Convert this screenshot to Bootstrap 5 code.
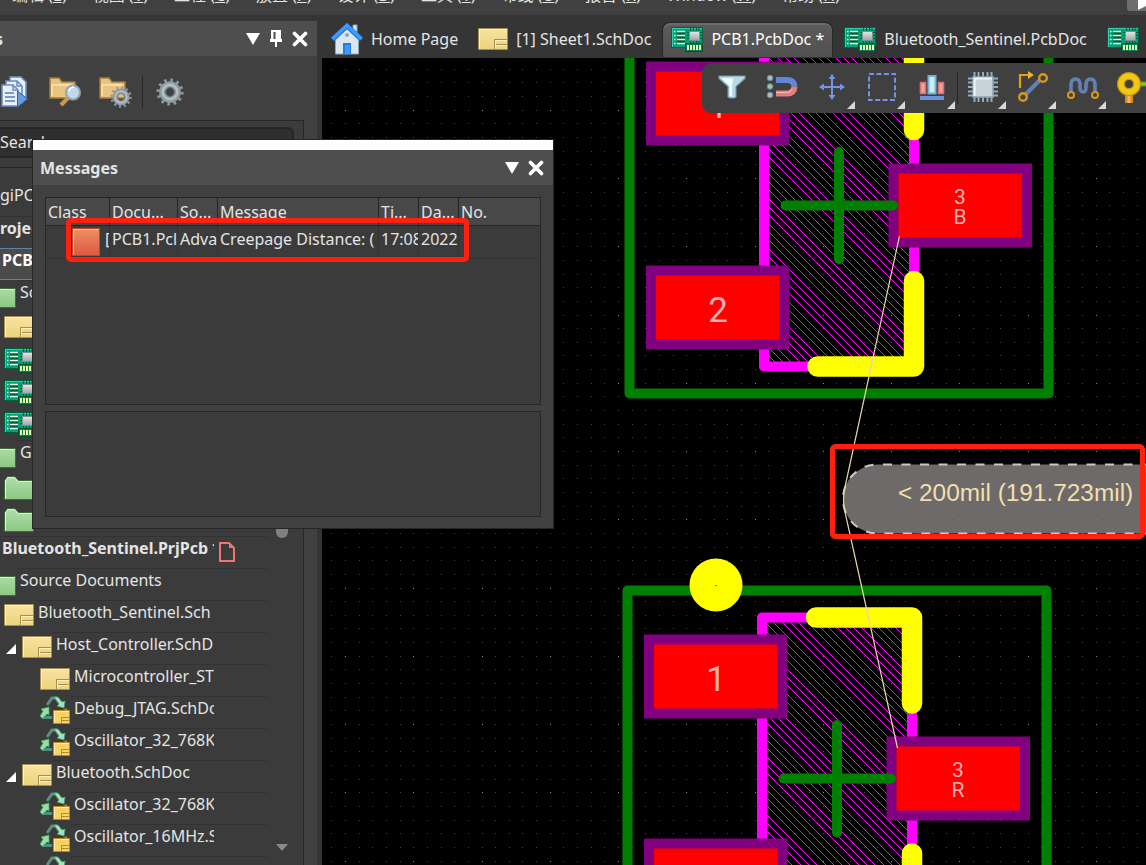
<!DOCTYPE html>
<html lang="zh-CN">
<head>
<meta charset="utf-8">
<meta name="viewport" content="width=device-width, initial-scale=1">
<title>PCB1.PcbDoc</title>
<link rel="stylesheet" href="https://cdn.jsdelivr.net/npm/bootstrap@5.3.0/dist/css/bootstrap.min.css">
<style>
  body { font-family: "Noto Sans", "Noto Sans CJK SC", sans-serif; font-size: 16px; line-height: 24px; background: #353535; color: #e4e4e4; }
  b { font-weight: 700; }
  button { font: inherit; color: inherit; background: none; border: 0; padding: 0; }
  svg { display: block; flex: none; }
  .menubar { height: 15px; background: #404040; gap: 26px; padding: 0 0 10px 12px; }
  .menubar button { line-height: 20px; white-space: nowrap; }
  .menu-tip { right: 0; top: 0; width: 19px; height: 11px; }
  .side { width: 317px; margin: 6px 5px 0 0; background: #404040; }
  .side-head { height: 35px; background: #4e4e4e; padding-right: 9px; gap: 10px; }
  .side-tools { height: 64px; }
  .side-search { width: 304px; height: 47px; border: 1px solid #262626; border-left: 0; border-bottom: 0; padding: 6px 9px 9px 0; background: #3c3c3c; }
  .side-search input { width: 100%; height: 31px; background: #2f2f2f; color: #e4e4e4; border: 2px solid #262626; border-left: 0; border-radius: 0 6px 6px 0; padding: 0 0 2px; outline: 0; }
  .tree-frame { width: 304px; border: 1px solid #262626; border-width: 1px 1px 0 0; background: #3b3b3b; padding-top: 16px; }
  .tree-list { width: 268px; }
  .tree-row { height: 32px; gap: 1px; flex: none; }
  .tree-row svg { margin-top: 4px; }
  .tree-text { border-top: 1px solid #333; height: 32px; padding: 0 54px 0 3px; min-width: 0; line-height: 22px; }
  .tree-text span { display: block; overflow: hidden; white-space: nowrap; }
  .lv-0 { padding-left: 4px; } .lv-1 { padding-left: 6px; } .lv-2 { padding-left: 40px; }
  .lv-1 .twist { margin-right: 5px; }
  .root-text { padding-left: 2px; font-weight: 700; }
  .picked { border: solid #5f83a5; border-width: 1px 0; background: #4b4b4b; font-weight: 700; padding-left: 1px; color: #fff; }
  .picked .tree-text { border: 0; padding-left: 1px; }
  .scroller { width: 12px; margin-left: 8px; padding-bottom: 14px; }
  .scroller i { height: 53%; border-radius: 6px; background: #808080; }
  .doctabs { height: 43px; gap: 2px; padding: 7px 0 1px; background: #353535; line-height: 22px; }
  .doctab { height: 35px; gap: 8px; padding: 0 8px 2px; flex: none; border: 1px solid transparent; border-bottom: 0; white-space: nowrap; }
  .doctab.on { background: linear-gradient(#5c5c5c, #505050); border-color: #262626; border-radius: 8px 8px 0 0; box-shadow: inset 0 2px #6a6a6a; color: #fff; }
  .board { background: #000; min-height: 0; }
  .board text { font-family: "Liberation Sans", sans-serif; }
  .board .pad-no { font-family: Roboto, sans-serif; }
  .floatbar { left: 380px; right: 0; top: 5px; height: 50px; background: #404040; border-radius: 9px 0 0 9px; padding-left: 5px; overflow: hidden; }
  .floatbar button { width: 50px; height: 50px; flex: none; position: relative; padding-bottom: 2px; }
  .floatbar .more::after { content: ""; position: absolute; right: 2px; bottom: 4px; border: 4px solid transparent; border-right-color: #d8d8d8; border-bottom-color: #d8d8d8; }
  .bar-line { width: 1px; height: 32px; background: #262626; flex: none; }
  .dialog-box { left: 33px; top: 140px; width: 520px; height: 388px; background: #404040; border-top: 10px solid #fff; box-shadow: 0 0 0 1px #262626; z-index: 5; }
  .dialog-head { height: 35px; background: #4e4e4e; padding: 0 9px 0 7px; gap: 9px; }
  .grid-frame { margin: 12px 12px 0; height: 208px; border: 1px solid #262626; background: #3b3b3b; }
  .note-frame { margin: 6px 12px 0; height: 106px; border: 1px solid #262626; background: #3b3b3b; }
  .msgs { table-layout: fixed; width: 100%; border-collapse: separate; border-spacing: 0; }
  .msgs th, .msgs td { font-weight: 400; white-space: nowrap; overflow: hidden; padding: 0 0 0 2px; border-left: 1px solid #343434; }
  .msgs th { height: 28px; background: #484848; border-bottom: 1px solid #262626; border-left-color: #262626; }
  .msgs td { height: 33px; border-bottom: 1px solid #343434; line-height: 26px; vertical-align: top; }
  .msgs th:first-child, .msgs td:first-child { border-left: 0; }
  .marker { left: 33px; top: 68px; width: 403px; height: 44px; border: 5px solid #ff2010; border-radius: 5px; }
</style>
</head>
<body class="vh-100 d-flex flex-column overflow-hidden">

<svg width="0" height="0" class="position-absolute" aria-hidden="true">
  <defs>
    <linearGradient id="gSheet" x2="0" y2="1"><stop stop-color="#f6e3a0"/><stop offset="1" stop-color="#edd37b"/></linearGradient>
    <linearGradient id="gFold" x2="0" y2="1"><stop stop-color="#b4dcae"/><stop offset="1" stop-color="#8cc982"/></linearGradient>
    <linearGradient id="gChip" x2="0" y2="1"><stop stop-color="#e4e8e6"/><stop offset="1" stop-color="#98a8a2"/></linearGradient>
    <linearGradient id="gErr" x2="0" y2="1"><stop stop-color="#ec9064"/><stop offset="1" stop-color="#de5a40"/></linearGradient>
    <symbol id="sheet" viewBox="0 0 30 22"><path d="M.5.5h29v21H.5z" fill="url(#gSheet)" stroke="#a58f57"/><path d="M1.5 20.5v-19h27" fill="none" stroke="#fff2c0"/><path d="M16.500 21V11.500H29M16.500 16.500H29" fill="none" stroke="#a58f57"/><path d="M17.500 20.500V12.500H29M17.500 17.500H29" fill="none" stroke="#fff2c0"/></symbol>
    <symbol id="folder" viewBox="0 0 30 24"><path d="M.5 23.500V4.500L3.500.5H11l3.500 4H29.500v19z" fill="url(#gFold)" stroke="#3f6a3d"/><path d="M1.500 22.500V5L4 1.500h6.500L14 5.500H29" fill="none" stroke="#dcf2d8"/></symbol>
    <symbol id="pcb" viewBox="0 0 32 25"><path d="M.5.500h31v20h-31z" fill="#00a078" stroke="#00603c"/><path d="M1.500 20V1.500H31" fill="none" stroke="#35d0a8"/><path d="M6 4h8v13H6z" fill="#006038"/><path d="M6 4.500h8M6 8.500h8M6 12.500h8M6 16.500h8" stroke="#e8ffe8" stroke-width="1.300"/><path d="M3 4.500h1.500M3 8.500h1.500M3 12.500h1.500M3 16.500h1.500" stroke="#e8ffe8" stroke-width="1.300"/><path d="M19.500 1v16M22.500 1v16M25.500 1v16M28 1v16M16 5.500h15M16 8.500h15M16 11.500h15" stroke="#005a3a"/><path d="M18.500 4.500h10v9h-10z" fill="url(#gChip)" stroke="#7f8f89"/><path d="M14.500 16.500h17v8h-17z" fill="#008058" stroke="#00502f"/><path d="M17 18v5M20 18v5M23 18v5M26 18v5M29 18v5" stroke="#f1f79a" stroke-width="2"/></symbol>
    <symbol id="reuse" viewBox="0 0 32 28"><path d="M8 9l5-7h4l3 4" fill="none" stroke="#5c9082" stroke-width="3"/><path d="M15 1h4l4 5 3-1-1 7-7-2 2-2z" fill="#9be8b4" stroke="#4f9a72" stroke-width=".8"/><path d="M1 20l3-5-2-2 8-2v8l-2-1-4 5z" fill="#8fdfa6" stroke="#4f9a72" stroke-width=".8"/><path d="M5 20h8v3H4z" fill="#568a7c"/><path d="M24 14l3-2 2 2z" fill="#568a7c"/><path d="M14.500 14.500h16v13h-16z" fill="#f8d468" stroke="#b78a22"/><path d="M15.500 26.500v-11h14" fill="none" stroke="#ffeaa0"/><path d="M22.500 27v-5.500H30M22.500 24.500H30" fill="none" stroke="#b78a22"/></symbol>
    <symbol id="gear" viewBox="-14 -14 28 28"><circle r="11.800" fill="none" stroke="#8c9aa2" stroke-width="3.600" stroke-dasharray="2.500 3.678"/><circle r="7.600" fill="none" stroke="#8d9ba3" stroke-width="6.400"/><circle r="7.300" fill="none" stroke="#b3bfc5" stroke-width="2.400"/><circle r="4.300" fill="none" stroke="#5e6c74"/></symbol>
    <symbol id="cross" viewBox="0 0 16 16"><path d="M2.500 2.500l11 11M13.500 2.500l-11 11" stroke="#fff" stroke-width="3.600" stroke-linecap="round"/></symbol>
    <symbol id="down" viewBox="0 0 14 12"><path d="M0 0h14L7 12z" fill="#fff"/></symbol>
    <symbol id="twist" viewBox="0 0 10 10"><path d="M10 0v10H0z" fill="#fff"/></symbol>
  </defs>
</svg>

<nav class="menubar d-flex align-items-end overflow-hidden position-relative flex-shrink-0">
  <button>编辑 (<u>E</u>)</button><button>视图 (<u>V</u>)</button><button>工程 (<u>C</u>)</button><button>放置 (<u>P</u>)</button><button>设计 (<u>D</u>)</button><button>工具 (<u>T</u>)</button><button>布线 (<u>U</u>)</button><button>报告 (<u>R</u>)</button><button>Window (<u>W</u>)</button><button>帮助 (<u>H</u>)</button>
  <svg class="menu-tip position-absolute" viewBox="0 0 19 11"><path d="M0 0h19v11H3q-3 0-3-3z" fill="#6d6d6d"/><path d="M11 0h8v6l-8 4z" fill="#fff"/></svg>
</nav>

<div class="d-flex flex-grow-1" style="min-height:0">
  <aside class="side d-flex flex-column flex-shrink-0 overflow-hidden">
    <header class="side-head d-flex align-items-center flex-shrink-0">
      <b class="me-auto" style="margin-left:-5px">s</b>
      <button aria-label="Menu"><svg width="14" height="12"><use href="#down"/></svg></button>
      <button aria-label="Pin"><svg width="12" height="18" viewBox="0 0 12 18"><path d="M1 0h10v11H1z" fill="#fff"/><path d="M3.500 2h2v8h-2z" fill="#4e4e4e"/><path d="M0 9h12v3H0zM5 12h2v5H5z" fill="#fff"/></svg></button>
      <button aria-label="Close"><svg width="16" height="16"><use href="#cross"/></svg></button>
    </header>
    <div class="side-tools d-flex align-items-center flex-shrink-0 pt-2">
      <button aria-label="Compile"><svg width="29" height="32" viewBox="0 0 29 32"><g fill="#e8eff6" stroke="#6a8fbe" stroke-width="1.600"><path d="M10 1h11l5 5v17H10z"/><path d="M6 5h11l5 5v17H6z"/><path d="M2 9h11l5 5v16H2z"/></g><path d="M13 9v5h5M17 5v5h5" fill="none" stroke="#6a8fbe" stroke-width="1.500"/><path d="M5 17h9M5 21h10M5 25h10" stroke="#5a80b0" stroke-width="1.500"/><path d="M17.500 15l10 8-10 8z" fill="#6a9be0" stroke="#2f5fa8"/></svg></button>
      <button aria-label="Find files" style="margin-left:20px"><svg width="32" height="32" viewBox="0 0 32 32"><path d="M1 22V2h9l3 4h13v16z" fill="#e9c47e" stroke="#a07a3c" stroke-width="1.600"/><path d="M3 20V9h20" fill="none" stroke="#fbe6b8" stroke-width="1.400"/><path d="M19 22l-7 7" stroke="#c99a4c" stroke-width="4"/><circle cx="24" cy="16.500" r="7" fill="#c5d8ea" stroke="#8fa5b5" stroke-width="2"/><path d="M20 15q1-4 5-4" fill="none" stroke="#fff" stroke-width="1.500"/></svg></button>
      <button aria-label="Folder options" style="margin-left:18px"><svg width="33" height="32" viewBox="0 0 33 32"><path d="M1 22V2h9l3 4h13v16z" fill="#e9c47e" stroke="#a07a3c" stroke-width="1.600"/><path d="M3 20V9h20" fill="none" stroke="#fbe6b8" stroke-width="1.400"/><use href="#gear" x="11" y="10" width="22" height="22"/></svg></button>
      <div class="bar-line" style="margin-left:10px"></div>
      <button aria-label="Settings" style="margin-left:13px"><svg width="28" height="28"><use href="#gear"/></svg></button>
    </div>
    <div class="side-search flex-shrink-0"><input type="text" value="Search" aria-label="Search"></div>
    <div class="tree-frame d-flex flex-grow-1 overflow-hidden">
      <div class="tree-list overflow-hidden">
        <div class="tree-row d-flex"><div class="tree-text flex-grow-1 border-0 ps-0"><span>giPC</span></div></div>
        <div class="tree-row d-flex"><div class="tree-text root-text flex-grow-1 ps-0"><span>rojec</span></div></div>
        <div class="tree-row d-flex picked"><div class="tree-text flex-grow-1"><span>PCB</span></div></div>
        <div class="tree-row d-flex"><svg width="16" height="24" viewBox="14 0 16 24"><use href="#folder" width="30" height="24"/></svg><div class="tree-text flex-grow-1"><span>So</span></div></div>
        <div class="tree-row d-flex lv-0"><svg width="30" height="22"><use href="#sheet"/></svg></div>
        <div class="tree-row d-flex lv-0"><svg width="32" height="25"><use href="#pcb"/></svg></div>
        <div class="tree-row d-flex lv-0"><svg width="32" height="25"><use href="#pcb"/></svg></div>
        <div class="tree-row d-flex lv-0"><svg width="32" height="25"><use href="#pcb"/></svg></div>
        <div class="tree-row d-flex"><svg width="16" height="24" viewBox="14 0 16 24"><use href="#folder" width="30" height="24"/></svg><div class="tree-text flex-grow-1"><span>G</span></div></div>
        <div class="tree-row d-flex lv-0"><svg width="30" height="24"><use href="#folder"/></svg></div>
        <div class="tree-row d-flex lv-0"><svg width="30" height="24"><use href="#folder"/></svg></div>
        <div class="tree-row d-flex position-relative"><div class="tree-text root-text flex-grow-1"><span>Bluetooth_Sentinel.PrjPcb *</span></div><svg class="position-absolute end-0 me-4" style="margin-top:6px" width="25" height="20" viewBox="0 0 25 20"><path d="M1 1h9l5 5v13H1z" fill="none" stroke="#f07474" stroke-width="2"/><path d="M10 1v5h5z" fill="#f07474"/></svg></div>
        <div class="tree-row d-flex"><svg width="16" height="24" viewBox="14 0 16 24"><use href="#folder" width="30" height="24"/></svg><div class="tree-text flex-grow-1"><span>Source Documents</span></div></div>
        <div class="tree-row d-flex lv-0"><svg width="30" height="22"><use href="#sheet"/></svg><div class="tree-text flex-grow-1"><span>Bluetooth_Sentinel.Sch</span></div></div>
        <div class="tree-row d-flex lv-1"><svg class="twist mt-2 pt-1" width="10" height="14"><use href="#twist"/></svg><svg width="30" height="22"><use href="#sheet"/></svg><div class="tree-text flex-grow-1"><span>Host_Controller.SchD</span></div></div>
        <div class="tree-row d-flex lv-2"><svg width="30" height="22"><use href="#sheet"/></svg><div class="tree-text flex-grow-1"><span>Microcontroller_ST</span></div></div>
        <div class="tree-row d-flex lv-2"><svg class="mt-0" width="30" height="28" viewBox="1 0 30 28"><use href="#reuse" width="32" height="28"/></svg><div class="tree-text flex-grow-1"><span>Debug_JTAG.SchDo</span></div></div>
        <div class="tree-row d-flex lv-2"><svg class="mt-0" width="30" height="28" viewBox="1 0 30 28"><use href="#reuse" width="32" height="28"/></svg><div class="tree-text flex-grow-1"><span>Oscillator_32_768K</span></div></div>
        <div class="tree-row d-flex lv-1"><svg class="twist mt-2 pt-1" width="10" height="14"><use href="#twist"/></svg><svg width="30" height="22"><use href="#sheet"/></svg><div class="tree-text flex-grow-1"><span>Bluetooth.SchDoc</span></div></div>
        <div class="tree-row d-flex lv-2"><svg class="mt-0" width="30" height="28" viewBox="1 0 30 28"><use href="#reuse" width="32" height="28"/></svg><div class="tree-text flex-grow-1"><span>Oscillator_32_768K</span></div></div>
        <div class="tree-row d-flex lv-2"><svg class="mt-0" width="30" height="28" viewBox="1 0 30 28"><use href="#reuse" width="32" height="28"/></svg><div class="tree-text flex-grow-1"><span>Oscillator_16MHz.S</span></div></div>
        <div class="tree-row d-flex lv-2"><svg class="mt-0" width="30" height="28" viewBox="1 0 30 28"><use href="#reuse" width="32" height="28"/></svg><div class="tree-text flex-grow-1"></div></div>
      </div>
      <div class="scroller d-flex flex-column justify-content-between"><i></i><svg width="12" height="7" viewBox="0 0 12 7"><path d="M0 0h12L6 7z" fill="#8a8a8a"/></svg></div>
    </div>
  </aside>

  <main class="d-flex flex-column flex-grow-1 overflow-hidden">
    <div class="doctabs d-flex flex-shrink-0 overflow-hidden">
      <button class="doctab d-flex align-items-center"><svg width="32" height="32" viewBox="0 0 32 32"><path d="M22 2h4v10h-4z" fill="#d8e4ec" stroke="#87a9bb"/><path d="M4.500 14L16 4l11.500 10v17h-23z" fill="#dce6f0" stroke="#87a9bb"/><path d="M1.500 16.500L16 3l14.500 13.500" fill="none" stroke="#1f6fd8" stroke-width="5"/><path d="M1.500 16L16 2.500 30.500 16" fill="none" stroke="#3d9bff" stroke-width="3.400"/><circle cx="16" cy="12" r="2" fill="#87a9bb"/><path d="M12 20h8v11h-8z" fill="#1f7cf0"/><path d="M14 22h5v9h-5z" fill="#3d9bff"/></svg>Home Page</button>
      <button class="doctab d-flex align-items-center"><svg width="30" height="22"><use href="#sheet"/></svg>[1] Sheet1.SchDoc</button>
      <button class="doctab on d-flex align-items-center"><svg width="32" height="25"><use href="#pcb"/></svg>PCB1.PcbDoc *</button>
      <button class="doctab d-flex align-items-center"><svg width="32" height="25"><use href="#pcb"/></svg>Bluetooth_Sentinel.PcbDoc</button>
      <button class="doctab d-flex align-items-center" aria-label="Next document"><svg width="32" height="25"><use href="#pcb"/></svg></button>
    </div>

    <section class="board position-relative flex-grow-1 overflow-hidden">
      <svg class="position-absolute w-100 h-100" role="img" aria-label="PCB layout">
        <g transform="translate(-322 -58)">
          <defs>
            <clipPath id="bodyA"><path d="M768 40h142v323H768z"/></clipPath>
            <clipPath id="bodyB"><path d="M766 621h142v260H766z"/></clipPath>
          </defs>
          <path id="minor" fill="#484848" shape-rendering="crispEdges"/>
          <path id="major" fill="#8a8a8a" shape-rendering="crispEdges"/>
          <g fill="none" stroke="#f0f" shape-rendering="crispEdges"><path id="hatchA" clip-path="url(#bodyA)"/><path id="hatchB" clip-path="url(#bodyB)"/></g>

          <g fill="none" stroke-linejoin="round" stroke-linecap="round" stroke-width="10">
            <path d="M629.500 40V393.500H1048.500V40" stroke="#008000"/>
            <path d="M764 40V366.500H914V40" stroke="#f0f"/>
            <path d="M627.500 900V590.500H1046.500V900" stroke="#008000"/>
            <path d="M762 900V617.500H912V900" stroke="#f0f"/>
          </g>
          <g fill="#f00" stroke="#800080" stroke-width="10">
            <path d="M651 66.500h133.500v74H651zM651 270.500h133.500v74H651zM893.500 168.500h133.500v74H893.500z"/>
            <path d="M649 639.500h133.500v74H649zM649 843.500h133.500v74H649zM891.500 741.500h133.500v74H891.500z"/>
          </g>
          <g fill="none" stroke-linejoin="round" stroke-linecap="round">
            <path d="M914 40V130M914 281V366.500H817.500M912 853.500V900M816 617.500H912V703.500" stroke="#ff0" stroke-width="20.500"/>
            <path d="M839 152V259M785.500 205.500H893M837 725V832.500M783.500 778.500H891" stroke="#008000" stroke-width="10"/>
          </g>
          <circle cx="716" cy="585" r="26.500" fill="#ff0"/><path d="M715 585h2v1h-2z" fill="#808000"/>
          <g fill="#ffb0b0" text-anchor="middle" font-size="35">
            <text class="pad-no" x="718" y="118">1</text><text class="pad-no" x="718" y="322">2</text><text class="pad-no" x="716" y="691">1</text>
            <g font-size="21"><text class="pad-no" x="960" y="204">3</text><text class="pad-no" x="960" y="224">B</text><text class="pad-no" x="958" y="777">3</text><text class="pad-no" x="958" y="797">R</text></g>
          </g>
          <path d="M1300 464.500H877.500a34.500 34.500 0 0 0 0 69H1300z" fill="#858080" fill-opacity=".83"/>
          <path d="M1300 464.500H877.500a34.500 34.500 0 0 0 0 69H1300" fill="none" stroke="#c8c8c8" stroke-width="2" stroke-dasharray="9 9.500" stroke-dashoffset="-1"/>
          <path d="M899.500 236L845 487 Q842 500 845 512L897.500 748" fill="none" stroke="#e6d7a6" stroke-width="1.200"/>
          <text x="898" y="501" font-size="24.400" fill="#f2dfae">&lt; 200mil (191.723mil)</text>
          <rect x="832.500" y="446.500" width="310" height="90" rx="3" fill="none" stroke="#ff2010" stroke-width="5"/>
        </g>
      </svg>

      <div class="floatbar position-absolute d-flex align-items-center">
        <button aria-label="Filter"><svg class="mx-auto" width="28" height="28" viewBox="0 0 28 28"><path d="M1 3h26v2.500l-9 8V24l-2 1h-4l-2-1V13.500L1 5.500z" fill="#b9dbe4" stroke="#7396aa" stroke-width="1.200"/><path d="M3 5.200h12l-1 8v10h-2.500V13z" fill="#eefafc"/></svg></button>
        <button aria-label="Snap"><svg class="mx-auto" width="32" height="28" viewBox="0 0 32 28"><g fill="#a6bdc0" stroke="#71898d"><circle cx="4" cy="5" r="2.800"/><circle cx="4" cy="13.500" r="2.800"/><circle cx="4" cy="22" r="2.800"/></g><path d="M10 7h11q7 0 7.500 6.500" fill="none" stroke="#5f86d8" stroke-width="6"/><path d="M28.500 13.500Q28 20.500 21 20.500H10" fill="none" stroke="#e08080" stroke-width="6"/><path d="M10 19.500h11q4 0 5-4" fill="none" stroke="#ffb4b4"/></svg></button>
        <button class="more" aria-label="Move"><svg class="mx-auto" width="28" height="28" viewBox="0 0 28 28"><path d="M14 3v22M3 14h22" stroke="#7293e6" stroke-width="2"/><path d="M14 1l3.500 5h-7zM14 27l3.500-5h-7zM1 14l5-3.500v7zM27 14l-5-3.500v7z" fill="#7293e6"/></svg></button>
        <button class="more" aria-label="Select"><svg class="mx-auto" width="28" height="28" viewBox="0 0 28 28"><path d="M1 1h26v26H1z" fill="none" stroke="#7293e6" stroke-width="2" stroke-dasharray="5 2.430"/></svg></button>
        <button class="more" aria-label="Align"><svg class="mx-auto" width="26" height="28" viewBox="0 0 26 28"><path d="M1.500 9.500h5v11h-5zM19.500 9.500h5v11h-5z" fill="#f0a0a0" stroke="#d87070" stroke-width="1.600"/><path d="M9.500 3h7v17.500h-7z" fill="#c8ecf8" stroke="#74b4d4" stroke-width="2"/><path d="M1 23h24v4H1z" fill="#6a94dc"/></svg></button>
        <div class="bar-line"></div>
        <button class="more" aria-label="Place part"><svg class="mx-auto" width="32" height="32" viewBox="0 0 32 32"><path d="M7.500 1v30M11.500 1v30M16 1v30M20.500 1v30M24.500 1v30M1 7.500h30M1 11.500h30M1 16h30M1 20.500h30M1 24.500h30" stroke="#93adbb" stroke-width="2"/><path d="M6 6h20v20H6z" fill="#c9d1d9" stroke="#8fa6b4" stroke-width="1.500"/><path d="M7.500 25V7.500H25" fill="none" stroke="#f2f6f8" stroke-width="2"/></svg></button>
        <button class="more" aria-label="Route"><svg class="mx-auto" width="32" height="32" viewBox="0 0 32 32"><path d="M8 24L24 8" stroke="#6480b0" stroke-width="4"/><path d="M3 17V4h10" fill="none" stroke="#e0a010" stroke-width="2.200"/><path d="M11 0l6 4-6 4z" fill="#f0b020"/><g fill="#40404a" stroke="#d89a10" stroke-width="2.400"><circle cx="26" cy="7" r="3.800"/><circle cx="6" cy="26" r="3.800"/></g></svg></button>
        <button class="more" aria-label="Tune length"><svg class="mx-auto" width="34" height="26" viewBox="0 0 34 26"><path d="M5 20V11q0-6 4.500-6T14 11v2q0 5 3 5t3-5v-2q0-6 4.500-6T29 11v9" fill="none" stroke="#6480b0" stroke-width="3.600"/><g fill="#40404a" stroke="#d89a10" stroke-width="2"><circle cx="5" cy="21" r="3"/><circle cx="29" cy="21" r="3"/></g></svg></button>
        <button aria-label="Place via"><svg class="ms-2" width="36" height="34" viewBox="0 0 36 34"><path d="M13 20v13" stroke="#d88a20" stroke-width="8"/><path d="M13 20v13" stroke="#f0b868" stroke-width="3"/><path d="M22 14h14" stroke="#5fa820" stroke-width="5"/><path d="M22 14h14" stroke="#a8e060"/><circle cx="13" cy="14" r="8" fill="none" stroke="#c89a00" stroke-width="8"/><circle cx="13" cy="14" r="8" fill="none" stroke="#f0c818" stroke-width="5.500"/></svg></button>
      </div>
    </section>
  </main>
</div>

<div class="dialog-box position-absolute" role="dialog" aria-label="Messages">
  <header class="dialog-head d-flex align-items-center">
    <b class="me-auto">Messages</b>
    <button aria-label="Menu"><svg width="14" height="12"><use href="#down"/></svg></button>
    <button aria-label="Close"><svg width="16" height="16"><use href="#cross"/></svg></button>
  </header>
  <div class="grid-frame">
    <table class="msgs">
      <colgroup><col style="width:63px"><col style="width:68px"><col style="width:40px"><col style="width:161px"><col style="width:40px"><col style="width:40px"><col></colgroup>
      <thead><tr><th>Class</th><th>Docu...</th><th>So...</th><th>Message</th><th>Ti...</th><th>Da...</th><th>No.</th></tr></thead>
      <tbody><tr><td><div class="d-flex overflow-hidden" style="padding-left:24px;gap:5px"><svg width="28" height="28" style="margin-top:2px" viewBox="0 0 28 28"><path d="M.5.500h27v27H.5z" fill="url(#gErr)" stroke="#c04a20"/><path d="M1.500 26.500v-25h25" fill="none" stroke="#ffc0a0"/></svg>[</div></td><td>PCB1.Pcl</td><td>Adva</td><td>Creepage Distance: (</td><td>17:08</td><td>2022</td><td></td></tr></tbody>
    </table>
  </div>
  <div class="note-frame"></div>
  <div class="marker position-absolute"></div>
</div>

<script src="https://cdn.jsdelivr.net/npm/bootstrap@5.3.0/dist/js/bootstrap.bundle.min.js"></script>
<script>
  // Editor grid: every fifth dot is a brighter major point.
  const step = 13.65, dots = { minor: '', major: '' };
  for (let i = -2; i < 180; i++) for (let j = -9; j < 120; j++) {
    const x = Math.round(345 + i * step), y = Math.round(178 + j * step);
    dots[i % 5 === 0 && j % 5 === 0 ? 'major' : 'minor'] += `M${x} ${y}h1v1h-1z`;
  }
  for (const id in dots) document.getElementById(id).setAttribute('d', dots[id]);
  // Diagonal hatching inside each component body, one pixel per row of each line.
  const hatch = (id, x, y, w, h) => {
    let d = '';
    for (let k = x - h; k < x + w; k += 8.3) d += `M${Math.round(k)} ${y + 0.5}` + 'h1m0 1'.repeat(h);
    document.getElementById(id).setAttribute('d', d);
  };
  hatch('hatchA', 766, 40, 150, 330);
  hatch('hatchB', 766, 615, 150, 290);
</script>
</body>
</html>
